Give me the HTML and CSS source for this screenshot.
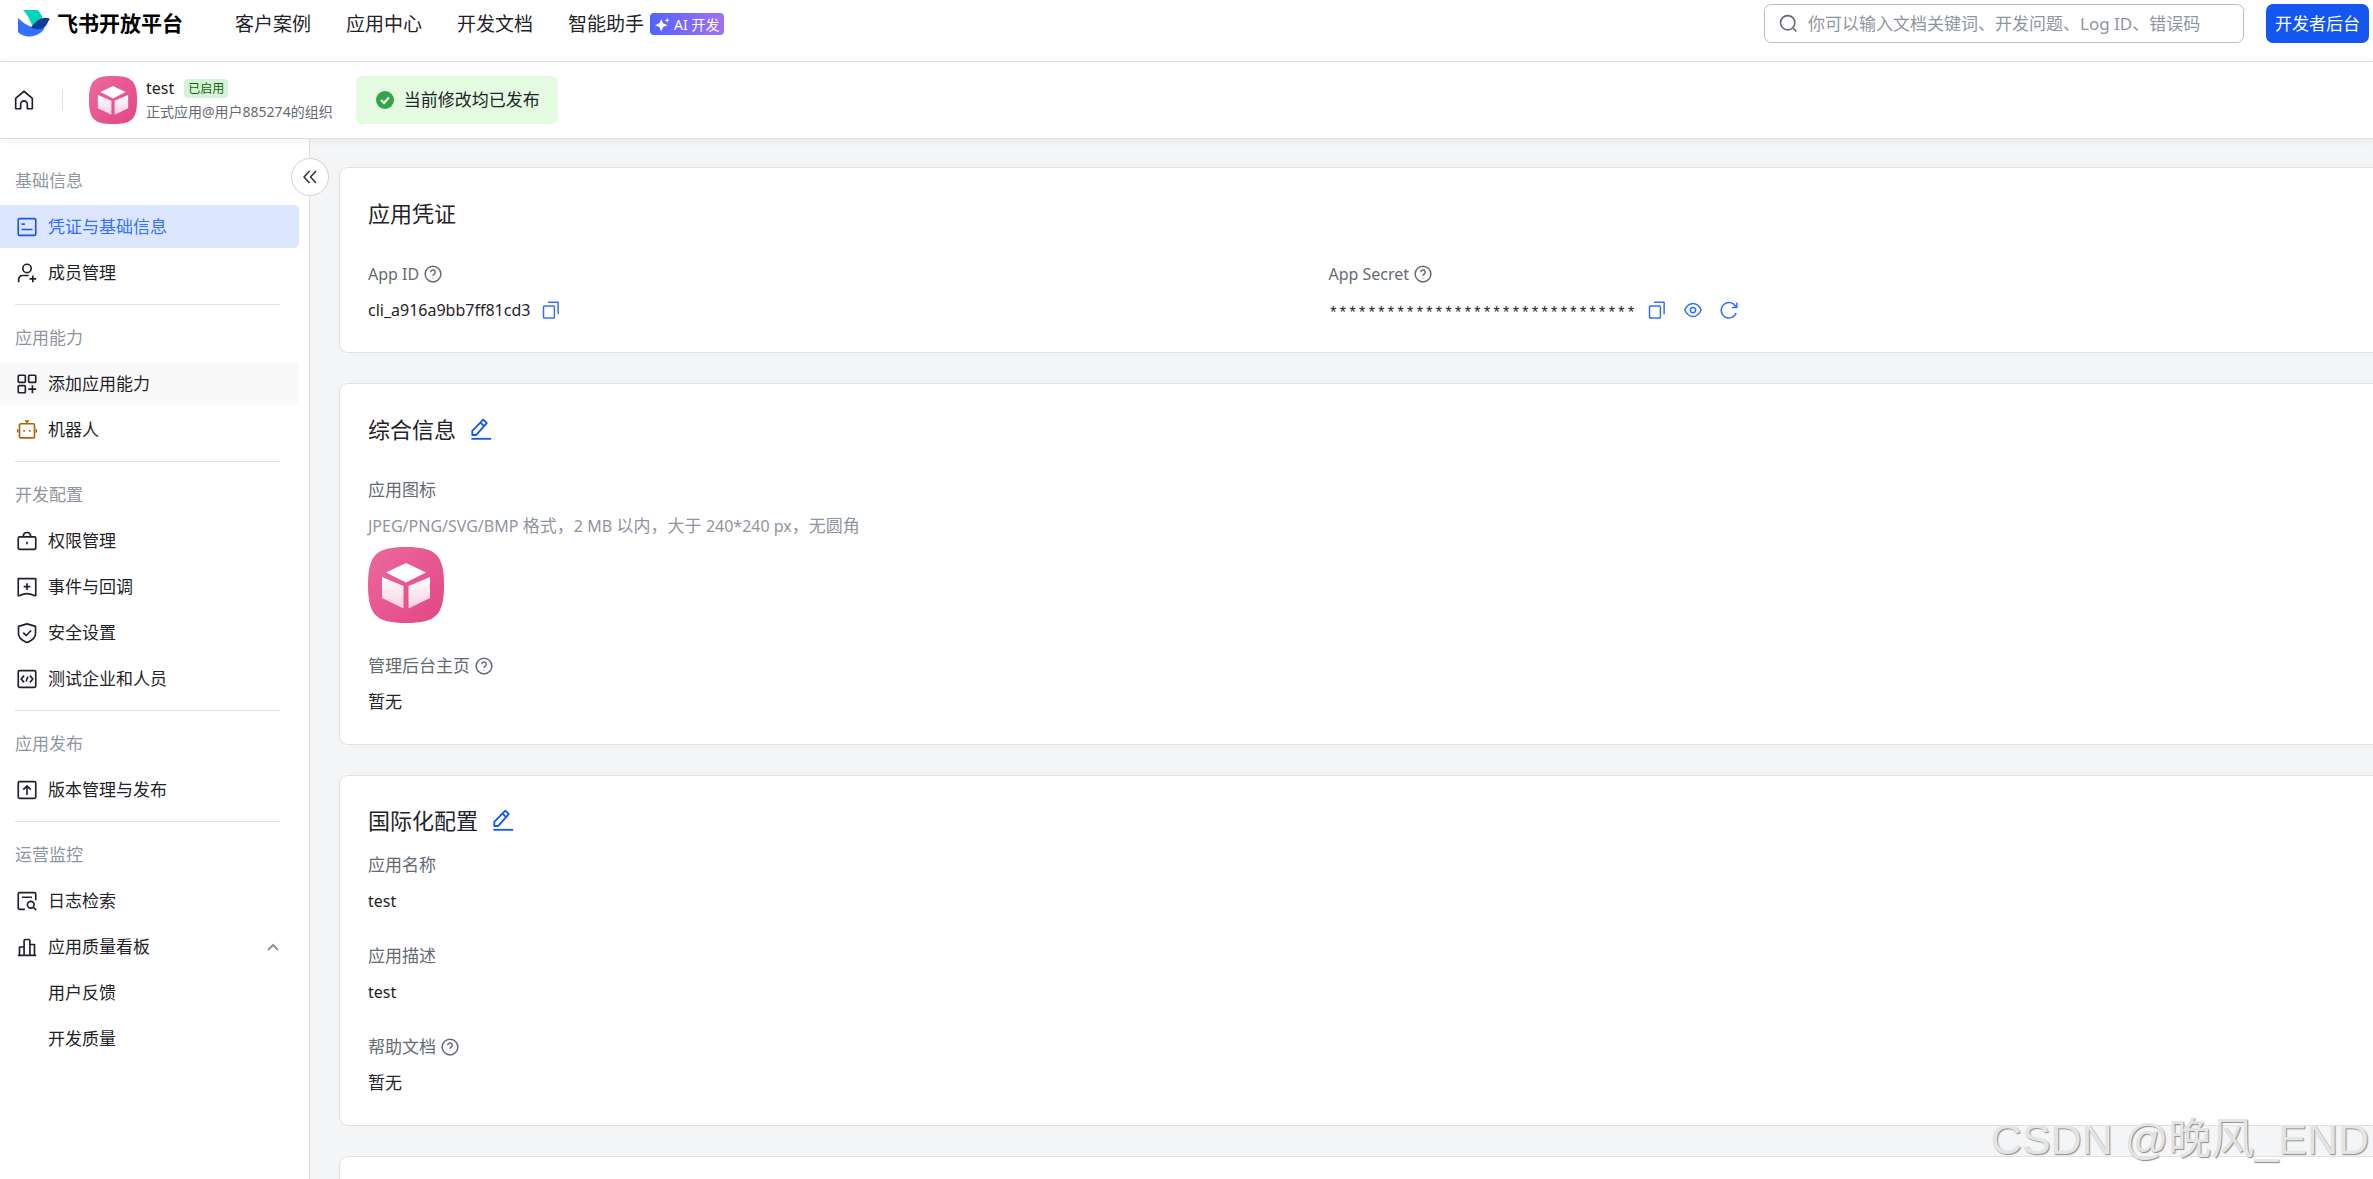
FILE: index.html
```
<!DOCTYPE html>
<html lang="zh-CN">
<head>
    <meta charset="UTF-8">
    <meta name="viewport" content="width=device-width, initial-scale=1.0">
    <title>飞书开放平台</title>
    <link rel="stylesheet" href="styles.css">
</head>
<body>
    <!-- shared icons -->
    <svg class="sprite" aria-hidden="true">
        <symbol id="i-help" viewBox="0 0 24 24"><circle cx="12" cy="12" r="10.5"/><path d="M9 9.7a3 3 0 1 1 4.4 2.6c-.9.5-1.4 1-1.4 2"/><path d="M12 17v.8"/></symbol>
        <symbol id="i-copy" viewBox="0 0 24 24"><rect x="2" y="6.500" width="14.500" height="16" rx="1"/><path d="M8 1.800h13.500v16"/></symbol>
        <symbol id="i-edit" viewBox="0 0 24 24"><path d="M2.500 14v4.500h4.300L18.300 5.500 14.500 1.800zM11.500 5l3.800 3.800"/><path d="M1.500 22.700h21.500"/></symbol>
        <symbol id="i-app" viewBox="0 0 76 76">
            <path d="M38 0C68 0 76 8 76 38S68 76 38 76 0 68 0 38 8 0 38 0z" fill="url(#pink)" stroke="none"/>
            <path d="M38 16l20 9.500L38 35.500 18 25.500zM14 30l21.500 9v22.500L14 51zM62 30l-21.500 9v22.500L62 51z" fill="url(#fade)" stroke="none"/>
        </symbol>
        <linearGradient id="pink" x1="0" y1="0" x2="1" y2="1"><stop offset="0" stop-color="#ea6a9b"/><stop offset="1" stop-color="#e44586"/></linearGradient>
        <linearGradient id="fade" x1="0" y1="0" x2="0" y2="1"><stop offset=".3" stop-color="#fff"/><stop offset="1" stop-color="#f9cfe0"/></linearGradient>
    </svg>

    <header class="topbar">
        <a class="logo" href="#">
            <svg viewBox="0 0 32 27">
                <path d="M5 0h14.500c2.500 2 4.300 5 4.800 8L15 17C12 10 9 4 5 0z" fill="#00d6b9"/>
                <path d="M0 8c7 7 16 12 27 9.500C24 23 18 26.500 12 26.500 7 26.500 2 24.500 0 22z" fill="#3370ff"/>
                <path d="M32 8.700C24 6 19 10 13 17.500c5 2.500 12 2.500 15-2 1.500-2.500 2.500-5 4-6.800z" fill="#133c9a"/>
            </svg>
            <span>飞书开放平台</span>
        </a>
        <nav class="nav">
            <a href="#">客户案例</a>
            <a href="#">应用中心</a>
            <a href="#">开发文档</a>
            <a href="#">智能助手</a>
        </nav>
        <span class="ai-tag">
            <svg viewBox="0 0 24 24"><path d="M10 3l3 7 7 3-7 3-3 7-3-7-7-3 7-3zM19.500 1l1 3 3 1-3 1.200-1 2.800-1-2.800-3-1.200 3-1z"/></svg>AI 开发
        </span>
        <label class="search">
            <svg class="icon" viewBox="0 0 24 24"><circle cx="11" cy="11" r="9"/><path d="M18 18l4 4"/></svg>
            <input type="text" aria-label="搜索" placeholder="你可以输入文档关键词、开发问题、Log ID、错误码">
        </label>
        <button class="console-btn">开发者后台</button>
    </header>

    <div class="appbar">
        <a class="home" href="#" aria-label="首页"><svg class="icon" viewBox="0 0 24 24"><path d="M2 10L12 1.500 22 10v12.500h-6V17a4 4 0 0 0-8 0v5.500H2z"/></svg></a>
        <svg class="app-icon small"><use href="#i-app"/></svg>
        <div class="app-meta">
            <div class="app-name"><span class="latin">test</span> <span class="tag">已启用</span></div>
            <div class="app-org">正式应用@用户885274的组织</div>
        </div>
        <div class="notice">
            <svg viewBox="0 0 18 18"><circle cx="9" cy="9" r="9" fill="#32a645"/><path d="M5 9l3 3 5-5.500" fill="none" stroke="#fff" stroke-width="2"/></svg>
            当前修改均已发布
        </div>
    </div>

    <div class="layout">
        <aside class="sidebar">
            <button class="collapse" aria-label="收起"><svg class="icon" viewBox="0 0 16 16"><path d="M7.500 2L2 8l5.500 6M14 2L8.500 8l5.500 6"/></svg></button>
            <section class="group">
                <h3>基础信息</h3>
                <a class="item active" href="#"><svg class="icon" viewBox="0 0 24 24"><rect x="1.500" y="2" width="21" height="20" rx="1.500"/><path d="M5.500 8.500h4M5.500 15h13"/></svg>凭证与基础信息</a>
                <a class="item" href="#"><svg class="icon" viewBox="0 0 24 24"><circle cx="12" cy="6.500" r="5"/><path d="M2 23v-3.500a4.500 4.500 0 0 1 4.500-4.500H14M19 15v8M15 19h8"/></svg>成员管理</a>
            </section>
            <section class="group">
                <h3>应用能力</h3>
                <a class="item hover" href="#"><svg class="icon" viewBox="0 0 24 24"><rect x="1.500" y="1.500" width="8.500" height="8.500" rx="1"/><rect x="14" y="1.500" width="8.500" height="8.500" rx="1"/><rect x="1.500" y="14" width="8.500" height="8.500" rx="1"/><path d="M18.500 13.500v9.500M13.500 18.200H23"/></svg>添加应用能力</a>
                <a class="item" href="#"><svg class="icon robot" viewBox="0 0 24 24"><rect x="3" y="4.500" width="18" height="17" rx="1.500"/><path d="M9.500 1.200h5M12 1.500v3M.8 11v4M23.200 11v4M8.500 12v2M15.500 12v2"/></svg>机器人</a>
            </section>
            <section class="group">
                <h3>开发配置</h3>
                <a class="item" href="#"><svg class="icon" viewBox="0 0 24 24"><rect x="1.500" y="7" width="21" height="15" rx="1.500"/><path d="M7.500 7c0-7 9-7 9 0M12 13v3"/></svg>权限管理</a>
                <a class="item" href="#"><svg class="icon" viewBox="0 0 24 24"><path d="M1.500 2h21v20.500l-2.500-.5c-5-2.500-11-2.500-16 0l-2.500.5zM12 7.500v8M8 11.500h8"/></svg>事件与回调</a>
                <a class="item" href="#"><svg class="icon" viewBox="0 0 24 24"><path d="M12 1L1.800 4v9c0 5 5 8.500 10.200 10.500C17.200 21.500 22.200 18 22.200 13V4z"/><path d="M7.500 11.500l3.500 3.500 6-6"/></svg>安全设置</a>
                <a class="item" href="#"><svg class="icon" viewBox="0 0 24 24"><rect x="1.500" y="2" width="21" height="20" rx="1.500"/><path d="M8.500 8L5 12l3.500 4M15.500 8l3.500 4-3.500 4M13 9l-2 6"/></svg>测试企业和人员</a>
            </section>
            <section class="group">
                <h3>应用发布</h3>
                <a class="item" href="#"><svg class="icon" viewBox="0 0 24 24"><rect x="1.500" y="2" width="21" height="20" rx="1.500"/><path d="M12 18V7.500M7.500 11.500L12 7l4.500 4.500"/></svg>版本管理与发布</a>
            </section>
            <section class="group">
                <h3>运营监控</h3>
                <a class="item" href="#"><svg class="icon" viewBox="0 0 24 24"><path d="M9.500 22H3a1.500 1.500 0 0 1-1.500-1.500v-17A1.500 1.500 0 0 1 3 2h18a1.500 1.500 0 0 1 1.500 1.500V11M6 7.500h12"/><circle cx="16.500" cy="16.500" r="4"/><path d="M19.500 19.500l3.500 3.500"/></svg>日志检索</a>
                <a class="item" href="#"><svg class="icon" viewBox="0 0 24 24"><path d="M1 22h22M3 22V12h5.500M15.500 9H21v13M8.500 22V4.500A1.500 1.500 0 0 1 10 3h4a1.500 1.500 0 0 1 1.500 1.500V22"/></svg>应用质量看板<svg class="arrow" viewBox="0 0 12 8"><path d="M1 7l5-5 5 5"/></svg></a>
                <a class="item sub" href="#">用户反馈</a>
                <a class="item sub" href="#">开发质量</a>
            </section>
        </aside>

        <main class="content">
            <section class="card">
                <h2>应用凭证</h2>
                <div class="columns">
                    <div class="field">
                        <div class="label latin">App ID <svg class="icon"><use href="#i-help"/></svg></div>
                        <div class="value"><span class="latin">cli_a916a9bb7ff81cd3</span>
                            <div class="actions">
                                <button aria-label="复制"><svg class="icon"><use href="#i-copy"/></svg></button>
                            </div>
                        </div>
                    </div>
                    <div class="field">
                        <div class="label latin">App Secret <svg class="icon"><use href="#i-help"/></svg></div>
                        <div class="value"><span class="secret">********************************</span>
                            <div class="actions">
                                <button aria-label="复制"><svg class="icon"><use href="#i-copy"/></svg></button>
                                <button aria-label="显示"><svg class="icon" viewBox="0 0 24 24"><path d="M1 12c5.500-11.500 16.500-11.500 22 0-5.500 11.500-16.500 11.500-22 0z"/><circle cx="12" cy="12" r="3.500"/></svg></button>
                                <button aria-label="重置"><svg class="icon" viewBox="0 0 24 24"><path d="M21.500 16a10.300 10.300 0 1 1-.5-8.500M22.500 2v6.500H16"/></svg></button>
                            </div>
                        </div>
                    </div>
                </div>
            </section>

            <section class="card">
                <h2>综合信息 <button class="edit-btn" aria-label="编辑"><svg class="icon"><use href="#i-edit"/></svg></button></h2>
                <div class="field">
                    <div class="label">应用图标</div>
                    <div class="hint"><span class="latin">JPEG/PNG/SVG/BMP</span> 格式，<span class="latin">2 MB</span> 以内，大于 <span class="latin">240*240 px</span>，无圆角</div>
                    <svg class="app-icon"><use href="#i-app"/></svg>
                </div>
                <div class="field">
                    <div class="label">管理后台主页 <svg class="icon"><use href="#i-help"/></svg></div>
                    <div class="value">暂无</div>
                </div>
            </section>

            <section class="card compact">
                <h2>国际化配置 <button class="edit-btn" aria-label="编辑"><svg class="icon"><use href="#i-edit"/></svg></button></h2>
                <div class="field">
                    <div class="label">应用名称</div>
                    <div class="value latin">test</div>
                </div>
                <div class="field">
                    <div class="label">应用描述</div>
                    <div class="value latin">test</div>
                </div>
                <div class="field">
                    <div class="label">帮助文档 <svg class="icon"><use href="#i-help"/></svg></div>
                    <div class="value">暂无</div>
                </div>
            </section>

            <section class="card"></section>
        </main>
    </div>

    <div class="watermark">CSDN @晚风_END</div>
</body>
</html>
```
FILE: styles.css
```
* {
    box-sizing: border-box;
}
body {
    margin: 0;
    height: 100vh;
    display: flex;
    flex-direction: column;
    overflow: hidden;
    font-family: "Noto Sans", "Noto Sans CJK SC", sans-serif;
    font-size: 17px;
    line-height: 24px;
    color: #1f2329;
    background: #fff;
}
a {
    color: inherit;
    text-decoration: none;
}
button {
    font: inherit;
    padding: 0;
    border: none;
    background: none;
    cursor: pointer;
}
h2, h3 {
    margin: 0;
    font-weight: 400;
}
svg {
    flex: none;
}
.sprite {
    position: absolute;
    width: 0;
    height: 0;
}
.icon {
    width: 20px;
    height: 20px;
    fill: none;
    stroke: currentColor;
    stroke-width: 2;
    stroke-linejoin: round;
}
.latin {
    font-size: 16px;
}

/* top navigation */
.topbar {
    flex: none;
    display: flex;
    align-items: flex-start;
    height: 62px;
    padding: 4px 4px 0 18px;
    line-height: 39px;
    border-bottom: 1px solid #dee0e3;
}
.logo {
    display: flex;
    align-items: center;
    gap: 7px;
    margin-right: 52px;
    font-size: 21px;
    font-weight: 700;
    color: #000;
}
.logo svg {
    width: 32px;
    height: 27px;
}
.nav {
    display: flex;
    gap: 35px;
    font-size: 19px;
    line-height: 41px;
}
.ai-tag {
    display: flex;
    align-items: center;
    gap: 4px;
    height: 22px;
    margin: 9px auto 0 6px;
    padding: 0 5px;
    border-radius: 4px;
    font-size: 14px;
    color: #fff;
    background: linear-gradient(90deg, #4f63ff, #a470f2);
}
.ai-tag svg {
    width: 15px;
    height: 15px;
    fill: #fff;
}
.search {
    display: flex;
    align-items: center;
    gap: 10px;
    width: 480px;
    height: 39px;
    margin-right: 22px;
    padding: 0 14px;
    border: 1px solid #bbbfc4;
    border-radius: 7px;
    color: #646a73;
}
.search .icon {
    width: 19px;
    height: 19px;
}
.search input {
    flex: 1;
    min-width: 0;
    padding: 0;
    border: none;
    outline: none;
    font: inherit;
    background: none;
}
.search input::placeholder {
    color: #8f959e;
    opacity: 1;
}
.console-btn {
    width: 103px;
    height: 39px;
    border-radius: 7px;
    color: #fff;
    background: #1456f0;
}

/* application bar */
.appbar {
    flex: none;
    position: relative;
    z-index: 2;
    display: flex;
    align-items: center;
    height: 77px;
    padding: 0 14px;
    border-bottom: 1px solid #dee0e3;
    box-shadow: 0 2px 8px rgba(31, 35, 41, 0.06);
}
.home {
    display: flex;
    height: 20px;
    padding-right: 28px;
    border-right: 1px solid #dee0e3;
}
.app-icon {
    display: block;
    width: 76px;
    height: 76px;
}
.app-icon.small {
    width: 48px;
    height: 48px;
    margin: 0 9px 0 26px;
}
.app-name {
    display: flex;
    align-items: center;
    gap: 10px;
}
.tag {
    height: 19px;
    padding: 0 4px;
    border-radius: 4px;
    font-size: 12px;
    line-height: 19px;
    color: #186010;
    background: #d5f2d9;
}
.app-org {
    font-size: 14px;
    color: #646a73;
}
.notice {
    display: flex;
    align-items: center;
    gap: 10px;
    height: 48px;
    margin-left: 23px;
    padding: 0 18px 0 20px;
    border-radius: 7px;
    background: #e4fae1;
}
.notice svg {
    width: 18px;
    height: 18px;
}

.layout {
    flex: 1;
    min-height: 0;
    display: flex;
}

/* side menu */
.sidebar {
    flex: none;
    position: relative;
    width: 310px;
    padding-top: 30px;
    border-right: 1px solid #dee0e3;
}
.collapse {
    position: absolute;
    z-index: 1;
    top: 19px;
    right: -20px;
    display: flex;
    align-items: center;
    justify-content: center;
    width: 38px;
    height: 38px;
    border: 1px solid #d0d3d6;
    border-radius: 50%;
    color: #2b2f36;
    background: #fff;
}
.collapse .icon {
    width: 16px;
    height: 16px;
    stroke-width: 1.5;
}
.group {
    display: flex;
    flex-direction: column;
    gap: 3px;
}
.group h3 {
    margin: 0 0 9px 15px;
    font-size: 17px;
    color: #8f959e;
}
.group:not(:last-child)::after {
    content: "";
    height: 1px;
    margin: 7px 29px 21px 15px;
    background: #dee0e3;
}
.item {
    display: flex;
    align-items: center;
    gap: 11px;
    height: 43px;
    margin-right: 10px;
    padding: 0 20px 0 17px;
    border-radius: 0 5px 5px 0;
}
.item.active {
    color: #3370ff;
    background: #dde6ff;
}
.item.active .icon {
    color: #1456f0;
}
.item.hover {
    background: #f9f9fa;
}
.item.sub {
    padding-left: 48px;
}
.robot {
    color: #b26206;
}
.arrow {
    width: 12px;
    height: 8px;
    margin-left: auto;
    fill: none;
    stroke: #8f959e;
    stroke-width: 2;
}

/* main area */
.content {
    flex: 1;
    display: flex;
    flex-direction: column;
    gap: 30px;
    padding: 28px 0 0 29px;
    background: #f4f5f7;
}
.card {
    flex: none;
    min-height: 62px;
    padding: 29px 84px 30px 28px;
    border: 1px solid #dee0e3;
    border-right: none;
    border-radius: 9px 0 0 9px;
    background: #fff;
}
.card h2 {
    display: flex;
    align-items: center;
    gap: 14px;
    margin-bottom: 33px;
    font-size: 22px;
    line-height: 32px;
}
.card.compact {
    padding-top: 28px;
}
.card.compact h2 {
    margin-bottom: 17px;
}
.columns {
    display: grid;
    grid-template-columns: 1fr 1fr;
}
.field + .field {
    margin-top: 31px;
}
.columns .field + .field {
    margin-top: 0;
}
.label {
    display: flex;
    align-items: center;
    gap: 5px;
    margin-bottom: 12px;
    color: #646a73;
}
.label .icon {
    width: 18px;
    height: 18px;
}
.hint {
    margin-bottom: 9px;
    color: #8f959e;
}
.value {
    display: flex;
    align-items: center;
    gap: 12px;
    height: 24px;
}
/* asterisks sit high in the line */
.secret {
    padding-top: 8px;
    font-family: "Liberation Mono", monospace;
    font-size: 16px;
}
.actions {
    display: flex;
    gap: 18px;
}
.actions button, .edit-btn {
    display: flex;
    color: #1456f0;
}
.actions button {
    color: #3370ff;
}
.actions .icon {
    width: 18px;
    height: 18px;
}
.edit-btn .icon {
    width: 22px;
    height: 22px;
}

.watermark {
    position: absolute;
    right: 4px;
    bottom: 12px;
    font-family: "Liberation Sans", "Noto Sans CJK SC", sans-serif;
    font-size: 43px;
    line-height: 56px;
    color: #e3e4e6;
    text-shadow: 1px 1px 1px #8c8c8c;
    pointer-events: none;
}
```
